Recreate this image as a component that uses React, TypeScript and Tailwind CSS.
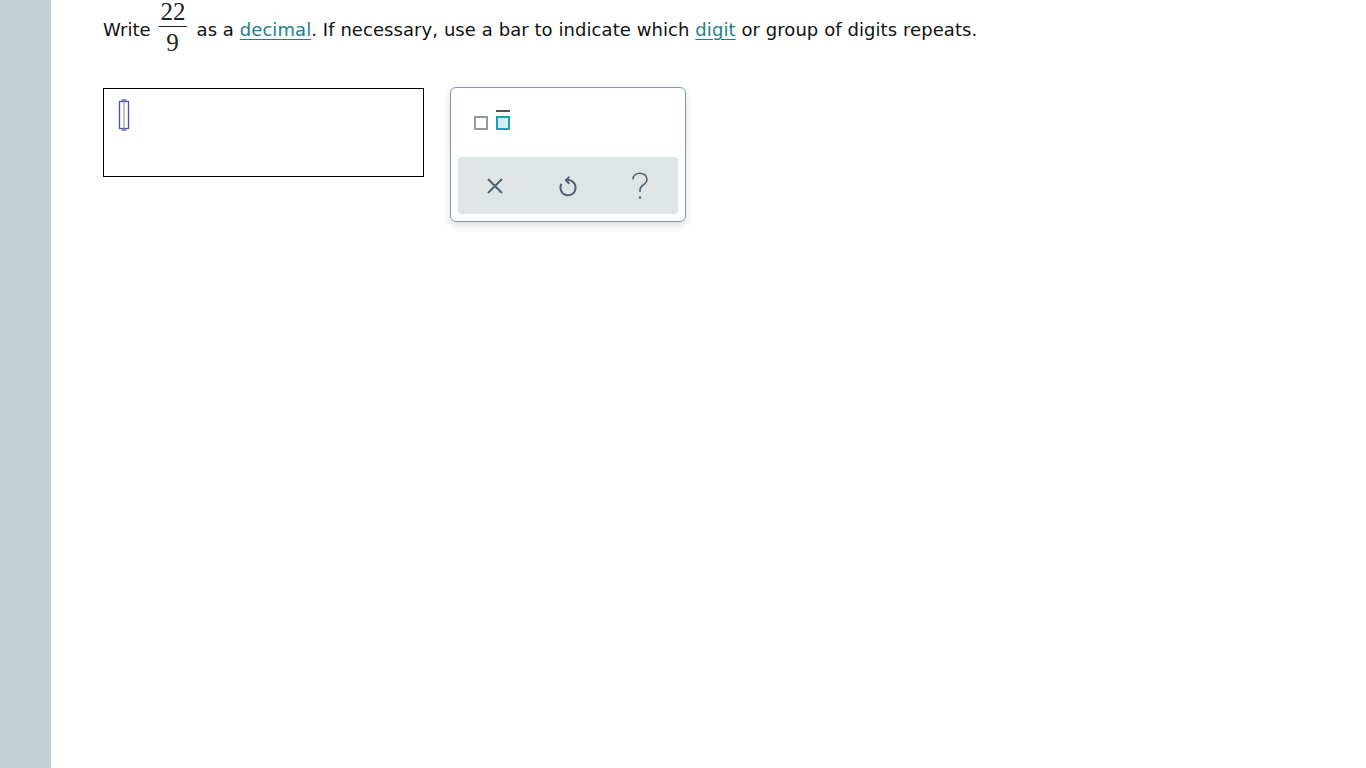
import React from 'react';

const font = { fontFamily: '"DejaVu Sans", Verdana, sans-serif' };

function Fraction({ num, den }: { num: string; den: string }) {
  return (
    <span className="inline-flex flex-col items-center ml-[8px] mr-[10px] font-['Liberation_Serif',serif] text-[25px] text-[#222]">
      <span className="leading-[24px] px-[2px] pb-[2px] border-b border-[#222] w-[28px] text-center">{num}</span>
      <span className="leading-[24px] pt-[4px]">{den}</span>
    </span>
  );
}

function Cursor() {
  return (
    <div className="relative w-[14px] h-[32px]">
      <svg width="14" height="32" viewBox="0 0 14 32">
        <rect x="2.5" y="2.5" width="9" height="27" fill="none" stroke="#4a4ad0" strokeWidth="1.3" />
        <line x1="7" y1="2" x2="7" y2="30" stroke="#8a8a6a" strokeWidth="1" />
        <line x1="4.5" y1="1" x2="9.5" y2="1" stroke="#333" strokeWidth="1" />
        <line x1="4.5" y1="31" x2="9.5" y2="31" stroke="#333" strokeWidth="1" />
      </svg>
    </div>
  );
}

function Keypad() {
  return (
    <div className="w-[236px] h-[135px] border border-[#7f9aa3] rounded-[6px] bg-white shadow-[0_3px_9px_rgba(0,0,0,0.15)] flex flex-col">
      <div className="h-[69px] flex items-start gap-[8px] pl-[23px] pt-[22px]">
        <div className="mt-[6px] w-[14px] h-[14px] border-2 border-[#8e9a9e]" />
        <div className="flex flex-col gap-[2px]">
          <div className="h-[2px] w-[14px] bg-[#555]" />
          <div className="mt-[2px] w-[14px] h-[14px] border-2 border-[#1d9fb5] bg-[#d3eef5]" />
        </div>
      </div>
      <div className="mx-[7px] h-[57px] rounded-[4px] bg-[#dfe5e7] flex items-center justify-between pl-[28px] pr-[29px]">
        <svg width="18" height="18" viewBox="0 0 18 18">
          <path d="M2 2 L16 16 M16 2 L2 16" stroke="#4b6670" strokeWidth="2" fill="none" />
        </svg>
        <svg width="26" height="26" viewBox="0 0 24 24" className="mt-[1px]">
          <path d="M5.94 10 A7 7 0 1 0 10.2 6.74" stroke="#4b6670" strokeWidth="1.8" fill="none" />
          <path d="M12.8 4 L10 6.74 L12.8 9.4" stroke="#4b6670" strokeWidth="1.8" fill="none" strokeLinecap="round" strokeLinejoin="round" />
        </svg>
        <svg width="18" height="28" viewBox="0 0 18 28" className="mt-[1px]">
          <path d="M2 7.5 C2 3.5 5 1.2 9 1.2 C13 1.2 16 3.8 16 7.3 C16 10.5 13.8 12 11.5 13.5 C9.8 14.6 9 15.8 9 18 L9 20" stroke="#4b6670" strokeWidth="1.6" fill="none" />
          <circle cx="9" cy="25.5" r="1.3" fill="#4b6670" />
        </svg>
      </div>
    </div>
  );
}

export default function App() {
  return (
    <div className="min-h-screen flex bg-white" style={font}>
      <div className="w-[51px] shrink-0 bg-[#c5d0d5] min-h-screen" />
      <main className="flex-1 pl-[52px]">
        <div className="flex items-start text-[18px] leading-[26px] text-[#111] whitespace-nowrap">
          <span className="pt-[17px]">Write</span>
          <Fraction num="22" den="9" />
          <span className="pt-[17px] tracking-[0.07px]">
            as a <a className="text-[#1a7f8e] underline underline-offset-[3px]" href="#">decimal</a>. If necessary, use a bar to indicate which{' '}
            <a className="text-[#1a7f8e] underline underline-offset-[3px]" href="#">digit</a> or group of digits repeats.
          </span>
        </div>
        <div className="mt-[32px] flex items-start gap-[26px]">
          <div className="mt-[1px] w-[321px] h-[89px] border border-black pl-[13px] pt-[10px]">
            <Cursor />
          </div>
          <Keypad />
        </div>
      </main>
    </div>
  );
}
